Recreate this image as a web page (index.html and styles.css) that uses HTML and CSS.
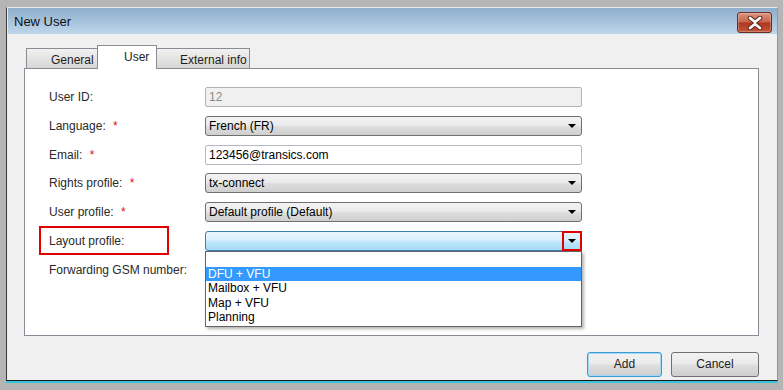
FILE: index.html
```html
<!DOCTYPE html>
<html>
<head>
    <meta http-equiv="Content-Type" content="text/html; charset=utf-8" />
    <title>New User</title>
    <link rel="stylesheet" href="styles.css">
</head>
<body>
<div class="window"><!-- dialog -->
    <div class="titlebar">
        <span class="title">New User</span>
        <div class="close-btn">
            <svg width="20" height="14" viewBox="0 0 20 14">
                <path d="M5 2 L10 6 L15 2 M5 12 L10 8 L15 12" fill="none" stroke="#5a2016" stroke-width="4.6" stroke-linecap="round" stroke-linejoin="round"/>
                <path d="M5 2 L10 6 L15 2 M5 12 L10 8 L15 12" fill="none" stroke="#fff" stroke-width="2.8" stroke-linecap="round" stroke-linejoin="round"/>
            </svg>
        </div>
    </div>
    <div class="client">
        <div class="tabs">
            <div class="tab tab-general">General</div>
            <div class="tab tab-on">User</div>
            <div class="tab tab-ext">External info</div>
        </div>
        <div class="panel">
            <div class="form">
                <div class="lbl">User ID:</div>
                <div class="field disabled">12</div>

                <div class="lbl">Language: <span class="req">*</span></div>
                <div class="field combo">French (FR)<span class="arrow"></span></div>

                <div class="lbl">Email: <span class="req">*</span></div>
                <div class="field text">123456@transics.com</div>

                <div class="lbl">Rights profile: <span class="req">*</span></div>
                <div class="field combo">tx-connect<span class="arrow"></span></div>

                <div class="lbl">User profile: <span class="req">*</span></div>
                <div class="field combo">Default profile (Default)<span class="arrow"></span></div>

                <div class="lbl lbl-mark">Layout profile:</div>
                <div class="field combo open">
                    <span class="arrow"></span>
                    <span class="mark-box"></span>
                    <ul class="droplist">
                        <li class="blank"></li>
                        <li class="sel">DFU + VFU</li>
                        <li>Mailbox + VFU</li>
                        <li>Map + VFU</li>
                        <li>Planning</li>
                    </ul>
                </div>

                <div class="lbl">Forwarding GSM number:</div>
                <div class="field text"></div>
            </div>
        </div>
        <div class="footer">
            <div class="btn btn-def">Add</div>
            <div class="btn btn-cancel">Cancel</div>
        </div>
    </div>
</div>
</body>
</html>
```
FILE: styles.css
```css
body,div,ul,li{margin: 0;padding: 0;}
ul,li{list-style: none;}

body{background: #b5b5b5;height: 390px;overflow: hidden;font-family: "Liberation Sans", Arial, sans-serif;font-size: 12px;color: #1e1e1e;}

.window{margin: 7px 0 0 6px;width: 770px;height: 372px;display: flex;flex-direction: column;border-left: 1px solid #3a3a3a;border-top: 1px solid #e8e8e8;border-right: 1px solid #8a9aa8;border-bottom: 1px solid #1a1a1a;box-shadow: 0 2px 0 #38c4dc;background: #f0f0f0;}

.titlebar{height: 26px;flex: none;display: flex;align-items: center;justify-content: space-between;padding: 0 5px 0 6px;background: linear-gradient(#8faecb, #a6c2dc 50%, #bfd6ea);border-left: 1px solid #dfeefa;}
.title{font-size: 13px;color: #111;}
.close-btn{width: 33px;height: 19px;margin-top: 3px;border: 1px solid #6a2a1c;border-radius: 3px;display: flex;align-items: center;justify-content: center;background: linear-gradient(#dc9582, #c9664e 45%, #b03820 55%, #c4563a);box-shadow: inset 0 0 0 1px rgba(255,255,255,.25);}

.client{flex: 1;display: flex;flex-direction: column;padding: 12px 18px 0 16px;border-left: 1px solid #dfeefa;}

.tabs{display: flex;align-items: flex-end;height: 22px;flex: none;padding-left: 2px;position: relative;z-index: 2;}
.tab{height: 19px;line-height: 22px;border: 1px solid #898c95;border-bottom: none;background: linear-gradient(#f2f2f2, #e4e4e4 50%, #d6d6d6);color: #1e1e1e;overflow: hidden;}
.tab-general{width: 46px;padding-left: 24px;border-right: none;}
.tab-on{width: 32px;padding-left: 26px;background: #fff;margin-bottom: -1px;height: 23px;line-height: 22px;}
.tab-ext{width: 69px;padding-left: 23px;border-left: none;}

.panel{height: 248px;flex: none;border: 1px solid #898c95;background: #fff;padding: 18px 0 0 24px;}

.form{display: grid;grid-template-columns: 156px 377px;grid-auto-rows: 20px;row-gap: 8.8px;}
.lbl{position: relative;line-height: 20px;color: #2a2a2a;}
.req{color: #e01010;margin-left: 4px;}
.lbl-mark::after{content: "";position: absolute;left: -10px;top: -5px;width: 126px;height: 25px;border: 2px solid #e00000;}

.field{position: relative;height: 20px;box-sizing: border-box;line-height: 18px;padding-left: 3px;border-radius: 2px;color: #000;}
.disabled{background: #f0f0f0;border: 1px solid #b4b4b4;color: #8a8a8a;}
.text{background: #fff;border: 1px solid #b5b8c0;}
.combo{border: 1px solid #707070;border-radius: 3px;background: linear-gradient(#f3f3f3, #ebebeb 45%, #dddddd 55%, #cfcfcf);}
.arrow{position: absolute;right: 5px;top: 7px;width: 0;height: 0;border-left: 4px solid transparent;border-right: 4px solid transparent;border-top: 4px solid #000;}
.open{border-color: #3c7fb1;background: linear-gradient(#eaf6fd, #d9f0fc 45%, #bee6fd 55%, #a7d9f5);}
.mark-box{position: absolute;right: -1px;top: -1px;width: 16px;height: 16px;border: 2px solid #e00000;}

.droplist{position: absolute;left: -1px;top: 19px;width: 375px;height: 74px;border: 1px solid #646464;background: #fff;box-shadow: 2px 2px 3px rgba(0,0,0,.3);z-index: 5;line-height: 14.5px;font-size: 12px;color: #000;}
.droplist li{height: 14.5px;padding-left: 2px;}
.droplist .blank{height: 15px;}
.droplist .sel{background: #3399ff;color: #fff;}

.footer{display: flex;justify-content: flex-end;gap: 9px;padding-top: 16px;}
.btn{height: 23px;line-height: 23px;text-align: center;border: 1px solid #707070;border-radius: 3px;background: linear-gradient(#f2f2f2, #ebebeb 45%, #dddddd 55%, #cfcfcf);color: #1e1e1e;}
.btn-def{width: 73px;border-color: #3c9bd6;box-shadow: inset 0 0 0 1px #9fd8f5;}
.btn-cancel{width: 86px;}
```
